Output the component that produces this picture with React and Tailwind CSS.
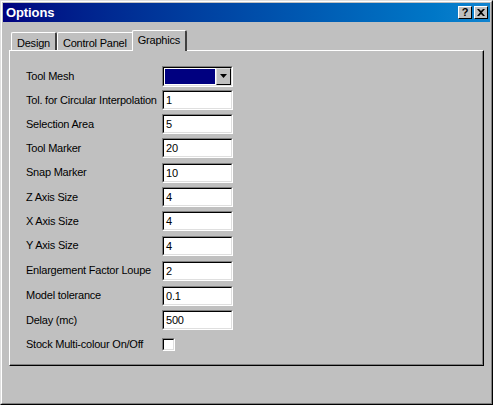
const rows = [
  { label: "Tool Mesh", type: "combo", h: "h-6" },
  { label: "Tol. for Circular Interpolation", value: "1", h: "h-6" },
  { label: "Selection Area", value: "5", h: "h-6" },
  { label: "Tool Marker", value: "20", h: "h-6" },
  { label: "Snap Marker", value: "10", h: "h-[25px]" },
  { label: "Z Axis Size", value: "4", h: "h-6" },
  { label: "X Axis Size", value: "4", h: "h-6" },
  { label: "Y Axis Size", value: "4", h: "h-[25px]" },
  { label: "Enlargement Factor Loupe", value: "2", h: "h-[25px]" },
  { label: "Model tolerance", value: "0.1", h: "h-[25px]" },
  { label: "Delay (mc)", value: "500", h: "h-6" },
  { label: "Stock Multi-colour On/Off", type: "check", h: "h-6" },
];

// sunken 2px win95 field border
const Sunken = ({ className = "", children }) => (
  <div className={`border border-t-[#808080] border-l-[#808080] border-b-white border-r-white ${className}`}>
    <div className="h-full w-full border border-t-black border-l-black border-b-[#dfdfdf] border-r-[#dfdfdf] bg-white">
      {children}
    </div>
  </div>
);

const Field = ({ row }) => {
  if (row.type === "combo") {
    return (
      <Sunken className="w-[71px] h-[21px]">
        <div className="flex h-full">
          <div className="flex-1 m-px bg-[#000080]" />
          <div className="w-[15px] h-full border border-t-[#dfdfdf] border-l-[#dfdfdf] border-b-black border-r-black bg-[#c0c0c0] flex items-center justify-center">
            <svg width="7" height="4" viewBox="0 0 7 4">
              <path d="M0 0h7L3.5 4z" fill="#000" />
            </svg>
          </div>
        </div>
      </Sunken>
    );
  }
  if (row.type === "check") {
    return <Sunken className="w-[13px] h-[13px]" />;
  }
  return (
    <Sunken className="w-[71px] h-5">
      <div className="pl-[2px] leading-[16px] text-[11px]">{row.value}</div>
    </Sunken>
  );
};

const Tab = ({ label, active }) => (
  <div
    className={`relative whitespace-nowrap border-l border-t border-t-white border-l-white border-r-2 border-r-[#404040] rounded-t-[2px] px-[5px] ${
      active ? "h-[21px] -mx-[2px] z-10 bg-[#c0c0c0] pt-[1px] -mb-px" : "h-[18px] pt-[2px]"
    }`}
  >
    {label}
  </div>
);

export default function App() {
  return (
    <div
      className="w-[493px] h-[405px] bg-[#c0c0c0] border border-t-[#dfdfdf] border-l-[#dfdfdf] border-b-black border-r-black text-black"
      style={{ fontFamily: "'Liberation Sans', Arial, sans-serif" }}
    >
      <div className="h-full border border-t-white border-l-white border-b-[#808080] border-r-[#808080] p-px">
        {/* title bar */}
        <div className="h-[19px] flex items-center justify-between bg-gradient-to-r from-[#000080] to-[#1084d0] pl-[3px] pr-[2px]">
          <span className="text-white font-bold text-[13px] tracking-[-0.1px]">Options</span>
          <div className="flex gap-[2px]">
            {["?", "×"].map((c) => (
              <div
                key={c}
                className="w-[14px] h-[13px] bg-[#c0c0c0] border border-t-white border-l-white border-b-black border-r-black flex items-center justify-center text-[11px] font-bold leading-none"
              >
                {c === "?" ? "?" : (
                  <svg width="8" height="7" viewBox="0 0 8 7">
                    <path d="M0 0h2l2 2 2-2h2L5 3.5 8 7H6L4 5 2 7H0l3-3.5z" fill="#000" />
                  </svg>
                )}
              </div>
            ))}
          </div>
        </div>

        {/* tabs */}
        <div className="mt-[8px] px-[6px] text-[11px] tracking-[-0.22px]">
          <div className="flex items-end pl-[2px] h-[20px]">
            <Tab label="Design" />
            <Tab label="Control Panel" />
            <Tab label="Graphics" active />
          </div>
          <div className="h-[316px] w-[475px] border-l border-t border-t-white border-l-white border-r border-b border-r-black border-b-black">
            <div className="h-full border-r border-b border-r-[#808080] border-b-[#808080] pt-[13px] pl-4">
              <div className="flex flex-col">
                {rows.map((r) => (
                  <div key={r.label} className={`flex items-center ${r.h}`}>
                    <div className="w-[136px] whitespace-nowrap">{r.label}</div>
                    <Field row={r} />
                  </div>
                ))}
              </div>
            </div>
          </div>
        </div>
      </div>
    </div>
  );
}
